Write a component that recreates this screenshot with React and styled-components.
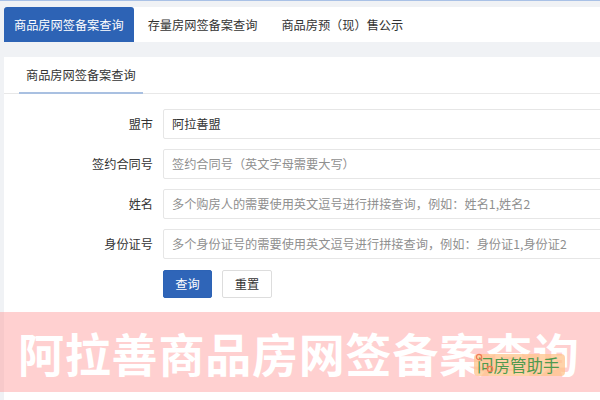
import React from "react";
import styled, { createGlobalStyle } from "styled-components";

const GlobalStyle = createGlobalStyle`
  html, body {
    margin: 0;
    padding: 0;
    background: #f0f2f5;
    overflow: hidden;
  }
  body {
    font-family: "Noto Sans CJK SC", "Noto Sans", sans-serif;
  }
`;

const Page = styled.div`
  position: relative;
  height: 400px;
  box-sizing: border-box;
  border-top: 1px solid #a9c1e6;
  padding: 6px 0 0 4px;
  display: flex;
  flex-direction: column;
  overflow: hidden;
`;

const TabBar = styled.div`
  display: flex;
  gap: 4px;
  height: 35px;
  background: #fff;
`;

const Tab = styled.div`
  display: flex;
  align-items: center;
  padding: 0 10px;
  font-size: 12.2px;
  color: ${(p) => (p.$active ? "#fff" : "#333")};
  background: ${(p) => (p.$active ? "#2d63b5" : "transparent")};
  border-radius: 3px 3px 0 0;
  white-space: nowrap;
`;

const Card = styled.div`
  flex: 1;
  margin-top: 15px;
  background: #fff;
`;

const CardHeader = styled.div`
  display: flex;
  height: 36px;
  padding-left: 15px;
  border-bottom: 1px solid #e8e8e8;
`;

const HeaderTab = styled.div`
  display: flex;
  align-items: center;
  padding: 0 7px;
  margin-bottom: -1px;
  font-size: 12.2px;
  color: #333;
  border-bottom: 2px solid #a9c0e1;
`;

const Form = styled.div`
  display: grid;
  grid-template-columns: 149px 1fr;
  column-gap: 10px;
  row-gap: 10px;
  padding-top: 15px;
  overflow: hidden;
`;

const Label = styled.label`
  text-align: right;
  font-size: 12.2px;
  line-height: 30px;
  color: #333;
`;

const Input = styled.input`
  width: 520px;
  height: 30px;
  box-sizing: border-box;
  border: 1px solid #e6e6e6;
  border-radius: 2px;
  padding: 0 8px;
  font-family: inherit;
  font-size: 12.2px;
  color: #333;
  outline: none;
  &::placeholder {
    color: #8f8f8f;
  }
`;

const Actions = styled.div`
  grid-column: 2;
  display: flex;
  gap: 10px;
  padding-top: 1px;
`;

const Button = styled.button`
  width: ${(p) => (p.$primary ? "49px" : "50px")};
  height: 28px;
  box-sizing: border-box;
  border-radius: 2px;
  border: 1px solid ${(p) => (p.$primary ? "#2d63b5" : "#ddd")};
  background: ${(p) => (p.$primary ? "#2f65b8" : "#fff")};
  color: ${(p) => (p.$primary ? "#fff" : "#333")};
  font-family: inherit;
  font-size: 12.2px;
  padding: 0;
`;

const Banner = styled.div`
  position: absolute;
  left: 0;
  right: 0;
  top: 311px;
  height: 80px;
  display: flex;
  align-items: center;
  padding-left: 18px;
  background: rgba(255, 150, 150, 0.45);
  color: #fff;
  font-size: 46px;
  font-weight: 700;
  letter-spacing: 0.8px;
  white-space: nowrap;
`;

const Badge = styled.div`
  position: absolute;
  left: 474px;
  top: 353px;
  width: 91px;
  height: 22px;
  display: flex;
  align-items: center;
  padding-left: 3px;
  box-sizing: border-box;
  border-radius: 4px;
  background: rgba(255, 196, 140, 0.75);
  color: #4f9a4f;
  font-size: 16.5px;
  white-space: nowrap;
`;

const Mark = styled.span`
  position: relative;
  display: inline-block;
`;

const Rings = styled.svg`
  position: absolute;
  left: -2px;
  top: -1px;
  width: 20px;
  height: 22px;
  overflow: visible;
`;

const fields = [
  { label: "盟市", value: "阿拉善盟" },
  { label: "签约合同号", placeholder: "签约合同号（英文字母需要大写）" },
  { label: "姓名", placeholder: "多个购房人的需要使用英文逗号进行拼接查询，例如：姓名1,姓名2" },
  { label: "身份证号", placeholder: "多个身份证号的需要使用英文逗号进行拼接查询，例如：身份证1,身份证2" },
];

export default function App() {
  return (
    <>
      <GlobalStyle />
      <Page>
        <TabBar>
          <Tab $active>商品房网签备案查询</Tab>
          <Tab>存量房网签备案查询</Tab>
          <Tab>商品房预（现）售公示</Tab>
        </TabBar>
        <Card>
          <CardHeader>
            <HeaderTab>商品房网签备案查询</HeaderTab>
          </CardHeader>
          <Form>
            {fields.map((f) => (
              <React.Fragment key={f.label}>
                <Label>{f.label}</Label>
                <Input defaultValue={f.value} placeholder={f.placeholder} readOnly />
              </React.Fragment>
            ))}
            <Actions>
              <Button $primary>查询</Button>
              <Button>重置</Button>
            </Actions>
          </Form>
        </Card>
        <Banner>阿拉善商品房网签备案查询</Banner>
        <Badge>
          <Mark>
            问
            <Rings viewBox="0 0 20 22">
              <circle cx="4" cy="5" r="2.6" fill="none" stroke="#f07a55" strokeWidth="1.3" />
              <circle cx="15" cy="17" r="2.6" fill="none" stroke="#f07a55" strokeWidth="1.3" />
            </Rings>
          </Mark>
          房管助手
        </Badge>
      </Page>
    </>
  );
}
